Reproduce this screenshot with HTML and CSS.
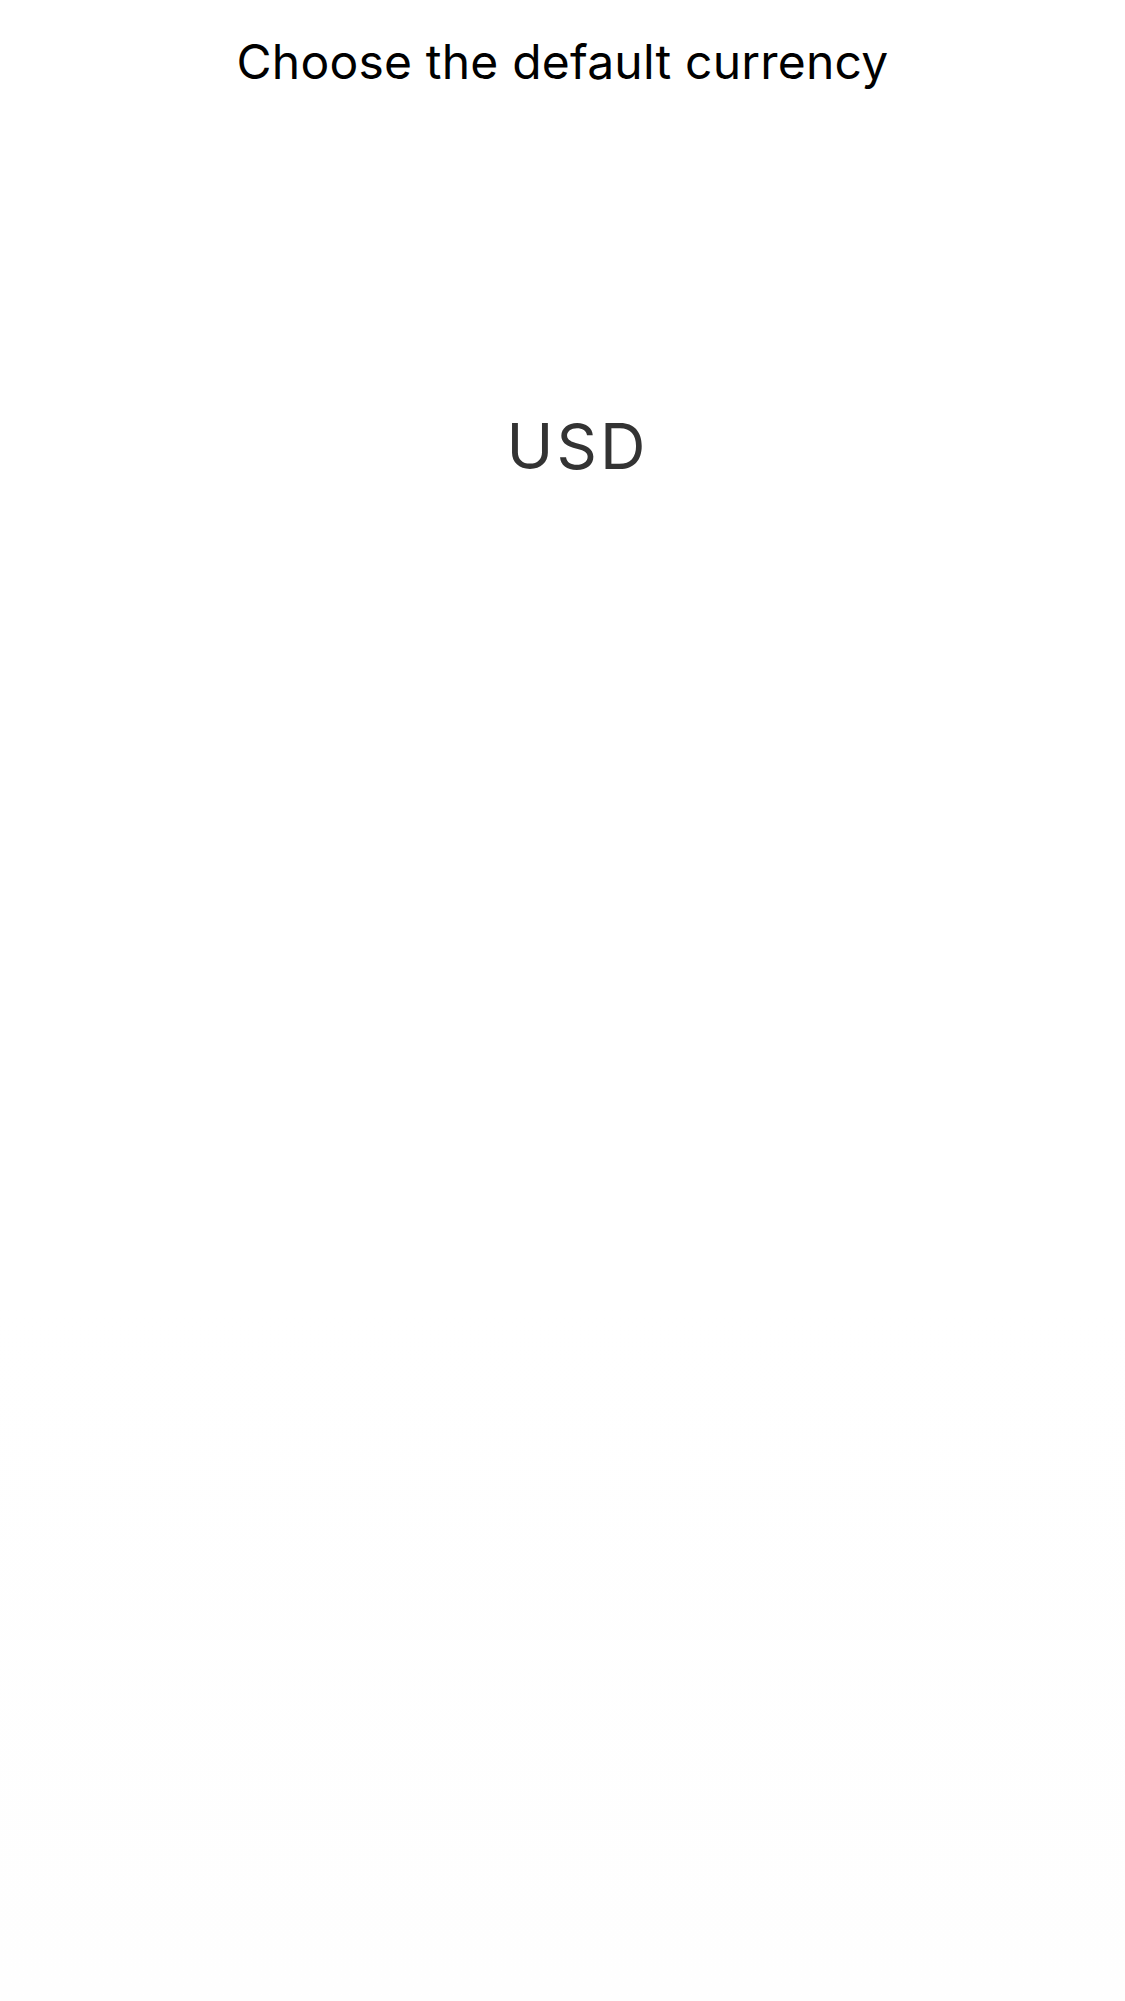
FILE: index.html
```html
<!DOCTYPE html>
<html lang="en">
<head>
<meta charset="utf-8">
<title>Choose the default currency</title>
<link rel="stylesheet" href="styles.css">
</head>
<body>
<main class="screen">
  <h1 class="title">Choose the default currency</h1>
  <div class="picker">
    <div class="picker-value">USD</div>
  </div>
</main>
</body>
</html>
```
FILE: styles.css
```css
html, body {
  margin: 0;
  padding: 0;
  background: #ffffff;
}
.screen {
  width: 1125px;
  height: 2001px;
  display: flex;
  flex-direction: column;
  background: linear-gradient(#ffffff 0, #ffffff 1300px, #fefefe 2001px);
  font-family: Inter, "Liberation Sans", Arial, sans-serif;
}
.title {
  margin: 0;
  padding-top: 32px;
  font-size: 48px;
  line-height: 60px;
  font-weight: 400;
  letter-spacing: 0.2px;
  color: #000000;
  text-align: center;
}
.picker {
  margin-top: 318px;
  display: flex;
  justify-content: center;
  padding-left: 30px;
}
.picker-value {
  font-size: 63px;
  line-height: 72px;
  letter-spacing: 3px;
  color: #333333;
}
```
